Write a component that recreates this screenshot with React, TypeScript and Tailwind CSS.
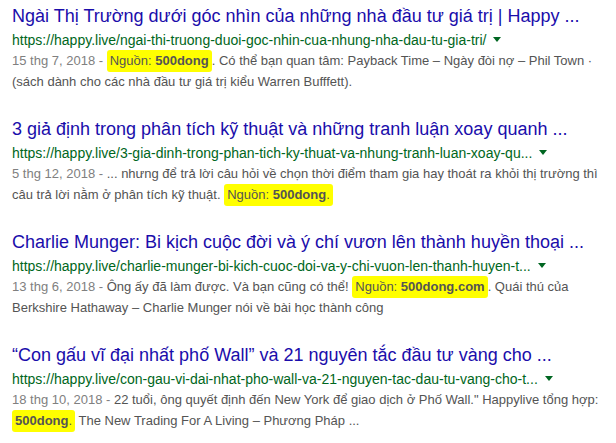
import React from "react";

const Arrow = () => (
  <svg width="8" height="5" viewBox="0 0 8 5" className="inline-block ml-[7px] mb-[3px]">
    <polygon points="0,0 8,0 4,5" fill="#006621" />
  </svg>
);

const Hl = ({ children }: { children: React.ReactNode }) => (
  <span className="bg-[#ffff00] px-[3px] pt-[3px] pb-[4px] rounded-[3px]">{children}</span>
);

type R = {
  title: string;
  url: string;
  lines: React.ReactNode[];
};

const results: R[] = [
  {
    title: "Ngài Thị Trường dưới góc nhìn của những nhà đầu tư giá trị | Happy ...",
    url: "https://happy.live/ngai-thi-truong-duoi-goc-nhin-cua-nhung-nha-dau-tu-gia-tri/",
    lines: [
      <>
        <span className="text-[#808080]">15 thg 7, 2018 - </span>
        <Hl>
          Nguồn: <b>500dong</b>
        </Hl>
        . Có thể bạn quan tâm: Payback Time – Ngày đòi nợ – Phil Town ·
      </>,
      <>(sách dành cho các nhà đầu tư giá trị kiểu Warren Bufffett).</>,
    ],
  },
  {
    title: "3 giả định trong phân tích kỹ thuật và những tranh luận xoay quanh ...",
    url: "https://happy.live/3-gia-dinh-trong-phan-tich-ky-thuat-va-nhung-tranh-luan-xoay-qu...",
    lines: [
      <>
        <span className="text-[#808080]">5 thg 12, 2018 - </span>... nhưng để trả lời câu hỏi về chọn thời điểm tham gia hay thoát ra khỏi thị trường thì
      </>,
      <>
        câu trả lời nằm ở phân tích kỹ thuật.{" "}
        <Hl>
          Nguồn: <b>500dong</b>.
        </Hl>
      </>,
    ],
  },
  {
    title: "Charlie Munger: Bi kịch cuộc đời và ý chí vươn lên thành huyền thoại ...",
    url: "https://happy.live/charlie-munger-bi-kich-cuoc-doi-va-y-chi-vuon-len-thanh-huyen-t...",
    lines: [
      <>
        <span className="text-[#808080]">13 thg 6, 2018 - </span>Ông ấy đã làm được. Và bạn cũng có thể!{" "}
        <Hl>
          Nguồn: <b>500dong.com</b>
        </Hl>
        . Quái thú của
      </>,
      <>Berkshire Hathaway – Charlie Munger nói về bài học thành công</>,
    ],
  },
  {
    title: "“Con gấu vĩ đại nhất phố Wall” và 21 nguyên tắc đầu tư vàng cho ...",
    url: "https://happy.live/con-gau-vi-dai-nhat-pho-wall-va-21-nguyen-tac-dau-tu-vang-cho-t...",
    lines: [
      <>
        <span className="text-[#808080]">18 thg 10, 2018 - </span>22 tuổi, ông quyết định đến New York để giao dịch ở Phố Wall." Happylive tổng hợp:
      </>,
      <>
        <Hl>
          <b>500dong</b>.
        </Hl>{" "}
        The New Trading For A Living – Phương Pháp ...
      </>,
    ],
  },
];

export default function App() {
  return (
    <div
      className="w-[616px] h-[443px] bg-white overflow-hidden pl-[12px] pt-[5px]"
      style={{ fontFamily: '"Liberation Sans", Arial, sans-serif' }}
    >
      {results.map((r, i) => (
        <div key={i} className="mb-[26px]">
          <div className="text-[18px] leading-[22px] text-[#1a0dab] whitespace-nowrap">{r.title}</div>
          <div className="text-[14px] leading-[20px] mt-[3px] text-[#006621] whitespace-nowrap">
            {r.url}
            <Arrow />
          </div>
          <div className="text-[13px] leading-[21px] text-[#545454]">
            {r.lines.map((l, j) => (
              <div key={j} className="whitespace-nowrap">
                {l}
              </div>
            ))}
          </div>
        </div>
      ))}
    </div>
  );
}
